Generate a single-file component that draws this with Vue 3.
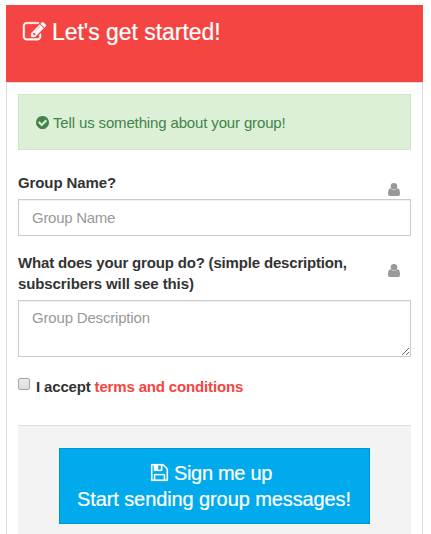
<script setup>
import { ref } from 'vue'

const groupName = ref('')
const description = ref('')
const accepted = ref(false)
const userIcon =
  'M9.300 3.300a3.300 3.300 0 1 1-6.600 0a3.300 3.300 0 1 1 6.600 0zM2.500 5.300Q0 5.700 0 10.800Q0 13 1.800 13H10.200Q12 13 12 10.800Q12 5.700 9.500 5.300Q6 8.900 2.500 5.300z'
</script>

<template>
  <form class="panel" @submit.prevent>
    <header class="heading">
      <svg class="heading-icon" viewBox="0 0 1792 1792"><path d="M888 1184l116-116-152-152-116 116v56h96v96h56zm440-720q-16-16-33 1l-350 350q-17 17-1 33t33-1l350-350q17-17 1-33zm80 594v190q0 119-84.5 203.5t-203.5 84.5h-832q-119 0-203.5-84.5t-84.5-203.5v-832q0-119 84.5-203.5t203.5-84.5h832q63 0 117 25 15 7 18 23 3 17-9 29l-49 49q-14 14-32 8-23-6-45-6h-832q-66 0-113 47t-47 113v832q0 66 47 113t113 47h832q66 0 113-47t47-113v-126q0-13 9-22l64-64q15-15 35-7t20 29zm-96-738l288 288-672 672h-288v-288zm444 132l-92 92-288-288 92-92q28-28 68-28t68 28l152 152q28 28 28 68t-28 68z" /></svg>
      <h1>Let's get started!</h1>
    </header>
    <div class="content">
      <div class="alert">
        <svg class="alert-icon" viewBox="128 128 1536 1536"><path d="M1412 734q0-28-18-46l-91-90q-19-19-45-19t-45 19l-408 407-226-226q-19-19-45-19t-45 19l-91 90q-18 18-18 46 0 27 18 45l362 362q19 19 45 19 27 0 46-19l543-543q18-18 18-45zm252 162q0 209-103 385.5t-279.5 279.5-385.5 103-385.5-103-279.5-279.5-103-385.5 103-385.5 279.5-279.5 385.5-103 385.5 103 279.5 279.5 103 385.5z" /></svg>
        <span>Tell us something about your group!</span>
      </div>

      <div class="field">
        <div class="label-row">
          <label class="name-label" for="name">Group Name?</label>
          <svg class="user-icon" viewBox="0 0 12 13"><path :d="userIcon" /></svg>
        </div>
        <input id="name" v-model="groupName" class="control" type="text" placeholder="Group Name" />
      </div>

      <div class="field about">
        <div class="label-row">
          <label for="about"><span class="line first">What does your group do? (simple description,</span> <span class="line second">subscribers will see this)</span></label>
          <svg class="user-icon" viewBox="0 0 12 13"><path :d="userIcon" /></svg>
        </div>
        <textarea id="about" v-model="description" class="control area" placeholder="Group Description"></textarea>
      </div>

      <label class="accept">
        <input v-model="accepted" type="checkbox" class="check" />
        <span>I accept <a>terms and conditions</a></span>
      </label>

      <footer class="actions">
        <button class="submit" type="submit">
          <span class="row signup">
            <svg class="save-icon" viewBox="128 128 1536 1536"><path d="M512 1536h768v-384h-768v384zm896 0h128v-896q0-14-10-38.5t-20-34.5l-281-281q-10-10-34-20t-39-10v416q0 40-28 68t-68 28h-576q-40 0-68-28t-28-68v-416h-128v1280h128v-416q0-40 28-68t68-28h832q40 0 68 28t28 68v416zm-384-928v-320q0-13-9.5-22.5t-22.5-9.5h-192q-13 0-22.5 9.5t-9.5 22.5v320q0 13 9.5 22.5t22.5 9.5h192q13 0 22.5-9.5t9.5-22.5zm640 32v928q0 40-28 68t-68 28h-1344q-40 0-68-28t-28-68v-1344q0-40 28-68t68-28h928q40 0 88 20t76 48l280 280q28 28 48 76t20 88z" /></svg>
            <span>Sign me up</span>
          </span>
          <span class="row pitch">Start sending group messages!</span>
        </button>
      </footer>
    </div>
  </form>
</template>

<style>
html, body { background: #fff; overflow: hidden; }
</style>

<style scoped>
* { box-sizing: border-box; }
svg { display: block; flex: none; fill: currentColor; overflow: visible; }
.panel {
  width: 417px;
  height: 529px;
  margin: 5px 0 0 6px;
  overflow: hidden;
  font: 15px/21px "Liberation Sans", Arial, sans-serif;
  color: #333;
}
.heading {
  display: flex;
  align-items: flex-start;
  gap: 6px;
  height: 77px;
  padding: 14px 17px;
  background: #f44542;
  color: #fff;
}
.heading-icon { width: 23px; height: 24px; margin-top: 1px; stroke: currentColor; stroke-width: 30; }
h1 { margin: 0; font-size: 23px; line-height: 26px; font-weight: 400; letter-spacing: -0.04px; -webkit-text-stroke: 0.2px; }
.content {
  height: 452px;
  padding: 11px 11px 0;
  border: 1px solid #ddd;
  border-bottom: 0;
}
.alert {
  display: flex;
  align-items: center;
  gap: 4px;
  height: 56px;
  padding: 0 17px;
  border: 1px solid #d2e6c4;
  background: #dcefd7;
  color: #43834a;
  letter-spacing: -0.145px;
}
.alert-icon { width: 13px; height: 13px; margin-top: 1px; }
.field { margin-top: 22px; }
.field.about { margin-top: 16px; }
.label-row { display: flex; justify-content: space-between; }
.label-row label { font-weight: 700; letter-spacing: -0.1px; }
.name-label { height: 27px; }
.line { display: block; white-space: nowrap; }
.first { letter-spacing: -0.175px; }
.user-icon { width: 12px; height: 13px; margin: 11px 11px 0 0; color: #999; }
.about .user-icon { margin-top: 12px; }
.control {
  display: block;
  width: 100%;
  height: 37px;
  padding: 0 13px;
  border: 1px solid #ccc;
  border-radius: 0;
  outline: 0;
  background: #fff;
  box-shadow: inset 0 1px 1px rgba(0, 0, 0, 0.07);
  font: inherit;
  letter-spacing: -0.28px;
  color: #555;
}
.control::placeholder { color: #999; opacity: 1; }
.area { height: 57px; padding: 6px 13px; margin-top: 6px; resize: both; letter-spacing: -0.18px; }
.accept { display: flex; gap: 6px; margin-top: 19px; font-weight: 700; letter-spacing: -0.16px; }
.accept a { color: #f44542; }
.check {
  appearance: none;
  width: 12px;
  height: 12px;
  margin: 2px 0 0;
  border: 1px solid #a5a5a5;
  border-radius: 2px;
  background: linear-gradient(#ececec, #dcdcdc);
}
.actions {
  display: flex;
  justify-content: center;
  height: 130px;
  margin-top: 28px;
  padding-top: 22px;
  border-top: 1px solid #ddd;
  background: #f3f3f3;
}
.submit {
  width: 311px;
  height: 76px;
  padding: 0 1px 0 0;
  border: 1px solid #0095d2;
  background: #00aaed;
  color: #fff;
  font: 20px/26px "Liberation Sans", Arial, sans-serif;
  -webkit-text-stroke: 0.2px;
}
.row { display: flex; align-items: center; justify-content: center; gap: 6px; white-space: nowrap; }
.save-icon { width: 17px; height: 17px; margin-top: -1px; stroke: currentColor; stroke-width: 16; }
.signup { padding-right: 5px; letter-spacing: -0.3px; }
.pitch { letter-spacing: -0.1px; }
</style>
